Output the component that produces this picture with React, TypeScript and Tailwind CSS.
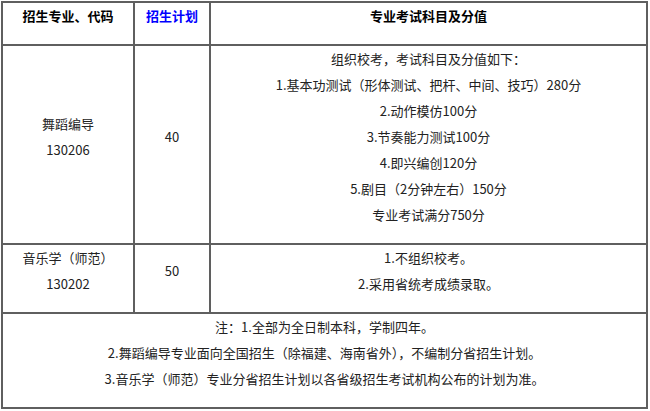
const font = {
  fontFamily: '"Noto Sans CJK SC", "Noto Sans", sans-serif',
};

const examItems = [
  "组织校考，考试科目及分值如下：",
  "1.基本功测试（形体测试、把杆、中间、技巧）280分",
  "2.动作模仿100分",
  "3.节奏能力测试100分",
  "4.即兴编创120分",
  "5.剧目（2分钟左右）150分",
  "专业考试满分750分",
];

const notes = [
  "注：1.全部为全日制本科，学制四年。",
  "2.舞蹈编导专业面向全国招生（除福建、海南省外），不编制分省招生计划。",
  "3.音乐学（师范）专业分省招生计划以各省级招生考试机构公布的计划为准。",
];

const cell =
  "border-2 border-[#5f5f5f] text-center align-middle pt-0 pb-[15px] px-1";

const App = () => {
  return (
    <div className="w-[650px] h-[411px] bg-white pt-px pl-px" style={font}>
      <table className="w-[647px] table-fixed border-collapse text-[13px] leading-[26px] text-[#222]">
        <colgroup>
          <col className="w-[132px]" />
          <col className="w-[76px]" />
          <col />
        </colgroup>
        <tbody>
          {/* Header */}
          <tr>
            <td className={`${cell} align-top font-bold text-black`}>招生专业、代码</td>
            <td className={`${cell} align-top font-bold text-[#0000ff]`}>招生计划</td>
            <td className={`${cell} align-top font-bold text-black`}>专业考试科目及分值</td>
          </tr>

          {/* 舞蹈编导 */}
          <tr>
            <td className={cell}>
              <div>舞蹈编导</div>
              <div>130206</div>
            </td>
            <td className={cell}>40</td>
            <td className={cell}>
              {examItems.map((item) => (
                <div key={item}>{item}</div>
              ))}
            </td>
          </tr>

          {/* 音乐学 */}
          <tr>
            <td className={cell}>
              <div>音乐学（师范）</div>
              <div>130202</div>
            </td>
            <td className={cell}>50</td>
            <td className={cell}>
              <div>1.不组织校考。</div>
              <div>2.采用省统考成绩录取。</div>
            </td>
          </tr>

          {/* Notes */}
          <tr>
            <td colSpan={3} className={cell}>
              {notes.map((n) => (
                <div key={n}>{n}</div>
              ))}
            </td>
          </tr>
        </tbody>
      </table>
    </div>
  );
};

export default App;
